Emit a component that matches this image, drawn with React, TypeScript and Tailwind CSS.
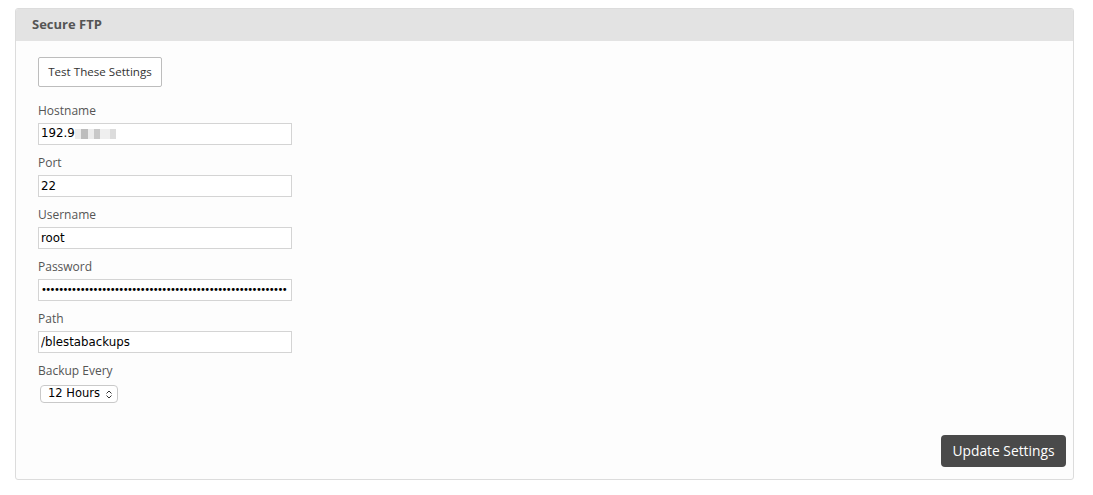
import React from "react";

const labelCls = "block text-[12px] leading-[16px] text-[#555] mb-[4px]";
const inputCls =
  "block w-[254px] h-[22px] border border-[#d4d4d4] bg-white px-[2px] text-[11.8px] text-black outline-none";
const mono = { fontFamily: '"DejaVu Sans", sans-serif' };

function Field({ label, children }: { label: string; children: React.ReactNode }) {
  return (
    <div className="mb-[10px]">
      <label className={labelCls}>{label}</label>
      {children}
    </div>
  );
}

export default function App() {
  const dots = "•".repeat(57);
  return (
    <div className="w-[1093px] h-[495px] bg-white pt-[8px] pl-[15px]" style={{ fontFamily: '"Open Sans", sans-serif' }}>
      <div className="w-[1059px] h-[472px] border border-[#dcdcdc] rounded-[3px] bg-[#fdfdfd] flex flex-col overflow-hidden">
        <div className="h-[32px] bg-[#e3e3e3] flex items-center pl-[16px] shrink-0">
          <span className="text-[13px] font-bold text-[#555]">Secure FTP</span>
        </div>
        <div className="flex-1 flex flex-col pl-[22px] pr-[7px] pt-[16px] pb-[12px]">
          <div>
            <button className="block h-[30px] w-[124px] border border-[#bdbdbd] rounded-[2px] bg-white text-[11.6px] text-[#333]">
              Test These Settings
            </button>
          </div>
          <div className="mt-[16px]">
            <Field label="Hostname">
              <div className={inputCls + " flex items-center"} style={mono}>
                <span>192.9</span>
                <span className="flex items-center h-[10px]">
                  <span className="w-[6px] h-[10px] bg-[#ececec]" />
                  <span className="w-[7px] h-[10px] bg-[#bdbdbd]" />
                  <span className="w-[6px] h-[10px] bg-[#ececec]" />
                  <span className="w-[6px] h-[10px] bg-[#c8c8c8]" />
                  <span className="w-[10px] h-[10px] bg-[#efefef]" />
                  <span className="w-[6px] h-[10px] bg-[#dcdcdc]" />
                </span>
              </div>
            </Field>
            <Field label="Port">
              <input readOnly value="22" className={inputCls} style={mono} />
            </Field>
            <Field label="Username">
              <input readOnly value="root" className={inputCls} style={mono} />
            </Field>
            <Field label="Password">
              <div className={inputCls + " overflow-hidden whitespace-nowrap flex items-center"} style={mono}>
                <span className="text-[10px] tracking-[-1.6px] leading-none text-black">{dots}</span>
              </div>
            </Field>
            <Field label="Path">
              <input readOnly value="/blestabackups" className={inputCls} style={mono} />
            </Field>
            <div>
              <label className="block text-[12px] leading-[16px] text-[#555] mb-[6px]">Backup Every</label>
              <div
                className="ml-[2px] w-[78px] h-[18px] border border-[#c9c9c9] rounded-[4px] bg-white flex items-center justify-between pl-[7px] pr-[4px] text-[11.5px] text-black"
                style={mono}
              >
                <span>12 Hours</span>
                <svg width="8" height="11" viewBox="0 0 8 11" fill="none" stroke="#333" strokeWidth="1">
                  <path d="M1.5 4.5 L4 2 L6.5 4.5" />
                  <path d="M1.5 6.5 L4 9 L6.5 6.5" />
                </svg>
              </div>
            </div>
          </div>
          <div className="mt-auto flex justify-end">
            <button className="h-[32px] w-[125px] bg-[#4a4a4a] rounded-[4px] text-white text-[13.8px]">
              Update Settings
            </button>
          </div>
        </div>
      </div>
    </div>
  );
}
